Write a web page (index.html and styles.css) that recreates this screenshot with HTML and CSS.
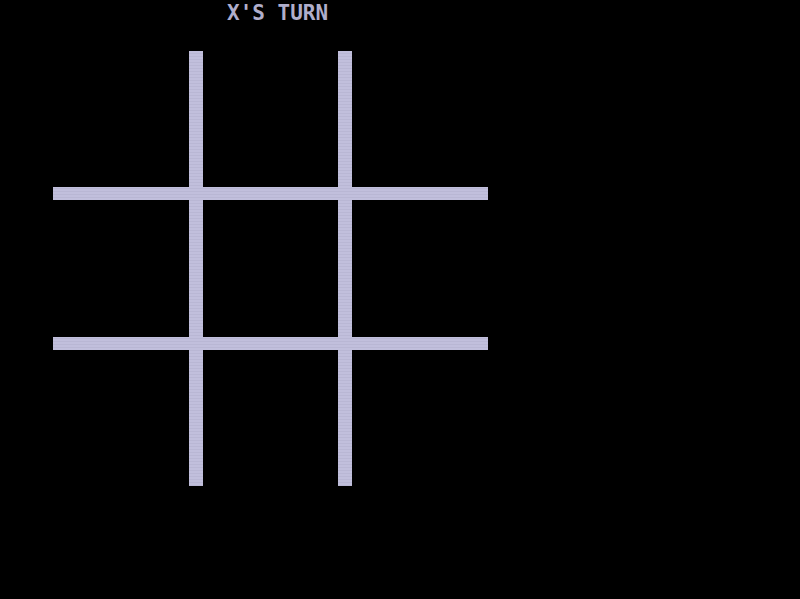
FILE: index.html
```html
<!DOCTYPE html>
<html lang="en">
<head>
    <meta charset="UTF-8">
    <meta name="viewport" content="width=device-width, initial-scale=1.0">
    <title>Tic Tac Toe</title>
    <link rel="stylesheet" href="styles.css">
</head>
<body>
    <main class="game">
        <h1 class="status">X'S TURN</h1>
        <div class="board">
            <button class="cell" aria-label="Top left"></button>
            <button class="cell" aria-label="Top middle"></button>
            <button class="cell" aria-label="Top right"></button>
            <button class="cell" aria-label="Middle left"></button>
            <button class="cell" aria-label="Center"></button>
            <button class="cell" aria-label="Middle right"></button>
            <button class="cell" aria-label="Bottom left"></button>
            <button class="cell" aria-label="Bottom middle"></button>
            <button class="cell" aria-label="Bottom right"></button>
        </div>
    </main>
</body>
</html>
```
FILE: styles.css
```css
body {
    margin: 0;
    background-color: #000;
    color: #b0aecb;
    font-family: "DejaVu Sans Mono", monospace;
}
.game {
    padding: 0 53px;
}
.status {
    margin: 0 0 24px;
    padding-left: 174px;
    font-size: 21px;
    font-weight: bold;
    line-height: 27px;
}
/* the gaps between the cells show through as the grid lines */
.board {
    display: grid;
    grid-template-columns: repeat(3, 1fr);
    grid-template-rows: repeat(3, 1fr);
    gap: 13px 14px;
    width: 62.7%;
    aspect-ratio: 1;
    background: repeating-linear-gradient(#c1bfdc 0 2px, #b9b7d4 2px 3px);
}
.cell {
    padding: 0;
    border: none;
    background-color: #000;
    cursor: pointer;
}
```
